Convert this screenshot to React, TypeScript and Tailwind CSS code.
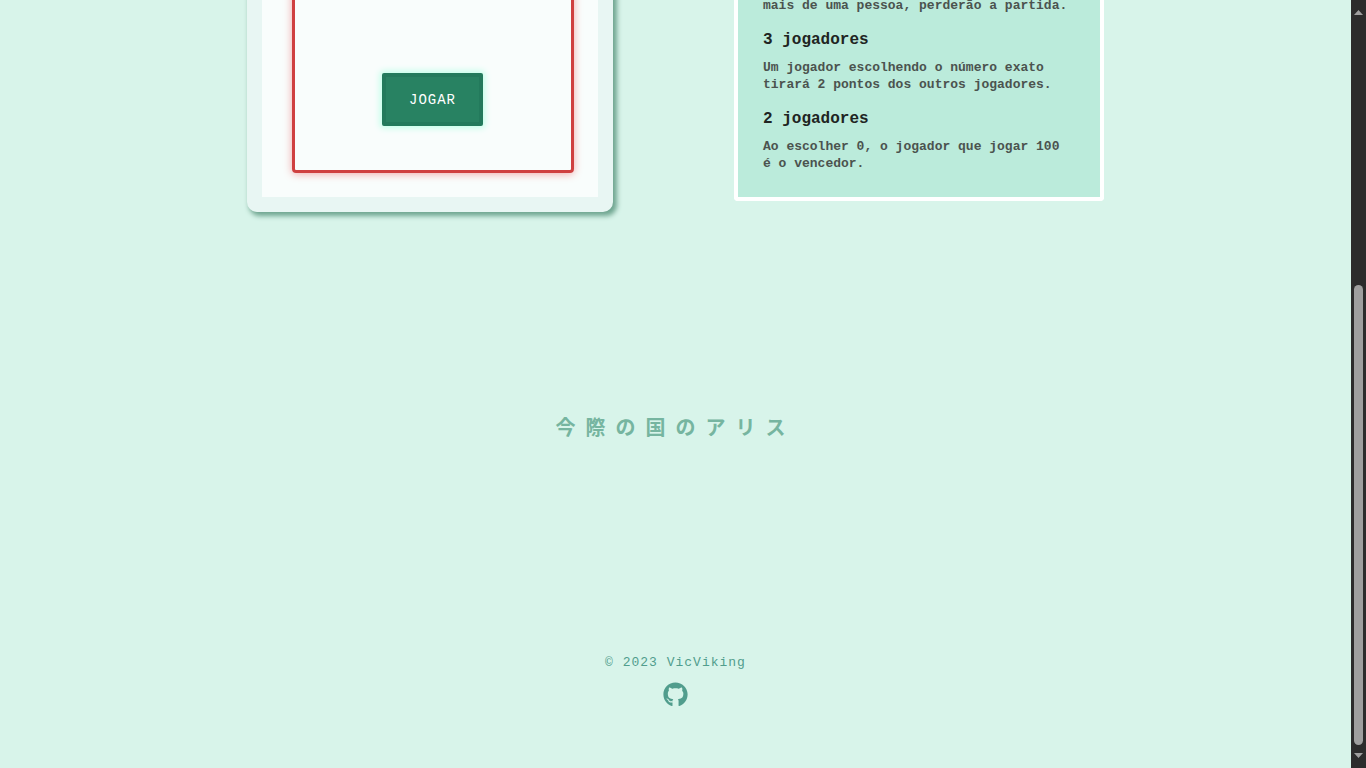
import React from "react";
import { FaGithub } from "react-icons/fa";

type Rule = { title: string; text: string };

const rules: Rule[] = [
  { title: "3 jogadores", text: "Um jogador escolhendo o número exato tirará 2 pontos dos outros jogadores." },
  { title: "2 jogadores", text: "Ao escolher 0, o jogador que jogar 100 é o vencedor." },
];

function GameCard() {
  return (
    <section className="-mt-4 w-[366px] rounded-b-[10px] border-[15px] border-[#e8f6f3] bg-[#f9fdfc] pr-6 pb-6 pl-[30px] shadow-[3px_3px_5px_1px_#6fa590]">
      <div className="-mt-4 flex justify-center rounded-b border-[3px] border-[#cf4040] pt-[87px] pr-px pb-11 shadow-[0_1px_8px_#f0a8a8]">
        <button
          type="button"
          className="h-[53px] w-[101px] rounded-xs border-4 border-[#237a5c] bg-[#288262] pt-0.5 text-[14px] tracking-[1px] text-white shadow-[0_0_6px_2px_#bfffe8]"
        >
          JOGAR
        </button>
      </div>
    </section>
  );
}

function RulesPanel() {
  return (
    <section className="w-[370px] rounded-b border-4 border-t-0 border-white bg-[#bbebdb] px-[25px] pb-[25px] font-bold">
      <p className="-mt-[3px] text-[13px] leading-[17px] text-[#4b534f]">
        mais de uma pessoa, perderão a partida.
      </p>
      {rules.map((rule) => (
        <article key={rule.title}>
          <h2 className="pt-4 pb-[9px] text-[16px] leading-5 text-[#202422]">{rule.title}</h2>
          <p className="text-[13px] leading-[17px] text-[#4b534f]">{rule.text}</p>
        </article>
      ))}
    </section>
  );
}

function ScrollRail() {
  return (
    <div aria-hidden="true" className="flex w-[15px] shrink-0 flex-col items-center bg-[#2c2c2c] py-2.5">
      <svg width="9" height="5" viewBox="0 0 9 5" fill="#9f9f9f"><path d="M4.5 0 9 5H0Z" /></svg>
      <div className="grow-[270]" />
      <div className="w-[9px] grow-[460] rounded-full bg-[#9f9f9f]" />
      <div className="h-2" />
      <svg width="9" height="5" viewBox="0 0 9 5" fill="#9f9f9f"><path d="M0 0H9L4.5 5Z" /></svg>
    </div>
  );
}

export default function App() {
  return (
    <div className="flex min-h-screen bg-[#d8f4ea] font-['Liberation_Mono',monospace]">
      <div className="flex min-w-0 flex-1 flex-col items-center overflow-hidden">
        <main className="flex items-start justify-center gap-[121px]">
          <GameCard />
          <RulesPanel />
        </main>
        <p
          lang="ja"
          className="mt-[200px] font-['Noto_Sans_CJK_JP',sans-serif] text-[20px] leading-[30px] font-bold tracking-[10px] text-[#76b5a0]"
        >
          今際の国のアリス
        </p>
        <footer className="mt-[211px] flex flex-col items-center gap-[9px] text-[#519d8d]">
          <p className="text-[13px] leading-5 tracking-[1px]">© 2023 VicViking</p>
          <a href="https://github.com/" aria-label="GitHub">
            <FaGithub size={25} />
          </a>
        </footer>
      </div>
      <ScrollRail />
    </div>
  );
}
